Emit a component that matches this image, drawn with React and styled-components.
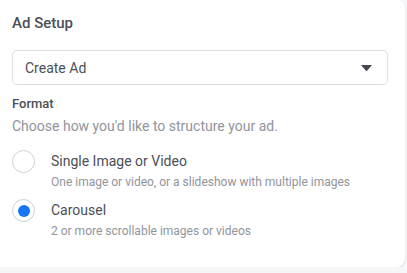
import React from 'react';
import styled, { createGlobalStyle } from 'styled-components';

const GlobalStyle = createGlobalStyle`
  html, body {
    margin: 0;
    padding: 0;
    background: #f5f6f7;
    font-family: Roboto, "Liberation Sans", Arial, sans-serif;
  }
`;

const options = [
  {
    id: 'single',
    label: 'Single Image or Video',
    hint: 'One image or video, or a slideshow with multiple images',
  },
  {
    id: 'carousel',
    label: 'Carousel',
    hint: '2 or more scrollable images or videos',
  },
];

const App = () => {
  const [format, setFormat] = React.useState('carousel');
  return (
    <>
      <GlobalStyle />
      <Card>
        <Title>Ad Setup</Title>
        <Select>
          <span>Create Ad</span>
          <Caret width="11" height="6" viewBox="0 0 11 6">
            <path d="M0 0h11L6.3 5.4a1.1 1.1 0 0 1-1.6 0z" fill="#444950" />
          </Caret>
        </Select>
        <Label>Format</Label>
        <Help>Choose how you'd like to structure your ad.</Help>
        <OptionList>
          {options.map((o) => (
            <Option key={o.id} onClick={() => setFormat(o.id)}>
              <Radio checked={format === o.id} />
              <OptionText>
                <OptionLabel>{o.label}</OptionLabel>
                <OptionHint>{o.hint}</OptionHint>
              </OptionText>
            </Option>
          ))}
        </OptionList>
      </Card>
    </>
  );
};

export default App;

const Card = styled.div`
  width: 405px;
  height: 267px;
  box-sizing: border-box;
  background: #fff;
  border-radius: 0 8px 8px 0;
  box-shadow: 0 1px 2px rgba(0, 0, 0, 0.12);
  padding: 14px 17px 0 12px;
  color: #444950;
`;

const Title = styled.h2`
  margin: 0;
  font-size: 15px;
  font-weight: 500;
  line-height: 18px;
  color: #4b4f56;
`;

const Select = styled.div`
  margin-top: 18px;
  height: 35px;
  box-sizing: border-box;
  border: 1px solid #dddfe2;
  border-radius: 5px;
  display: flex;
  align-items: center;
  justify-content: space-between;
  padding: 0 15px 0 12px;
  font-size: 14px;
  color: #4b4f56;
`;

const Caret = styled.svg`
  display: block;
`;

const Label = styled.div`
  margin-top: 11px;
  font-size: 13px;
  font-weight: 500;
  line-height: 16px;
  color: #4b4f56;
`;

const Help = styled.div`
  margin-top: 6px;
  font-size: 14px;
  line-height: 17px;
  color: #90949c;
`;

const OptionList = styled.div`
  margin-top: 16px;
  display: flex;
  flex-direction: column;
  gap: 10px;
`;

const Option = styled.div`
  display: flex;
  align-items: flex-start;
  gap: 16px;
  cursor: pointer;
`;

const Radio = styled.span`
  flex: none;
  width: 23px;
  height: 23px;
  box-sizing: border-box;
  border: 1px solid #ccd0d5;
  border-radius: 50%;
  margin-top: -1px;
  display: flex;
  align-items: center;
  justify-content: center;
  &::after {
    content: '';
    width: 12px;
    height: 12px;
    border-radius: 50%;
    background: ${(p) => (p.checked ? '#1877f2' : 'transparent')};
  }
`;

const OptionText = styled.div`
  display: flex;
  flex-direction: column;
`;

const OptionLabel = styled.div`
  font-size: 14px;
  line-height: 20px;
  color: #4b4f56;
`;

const OptionHint = styled.div`
  margin-top: 4px;
  font-size: 12px;
  line-height: 15px;
  color: #90949c;
`;
